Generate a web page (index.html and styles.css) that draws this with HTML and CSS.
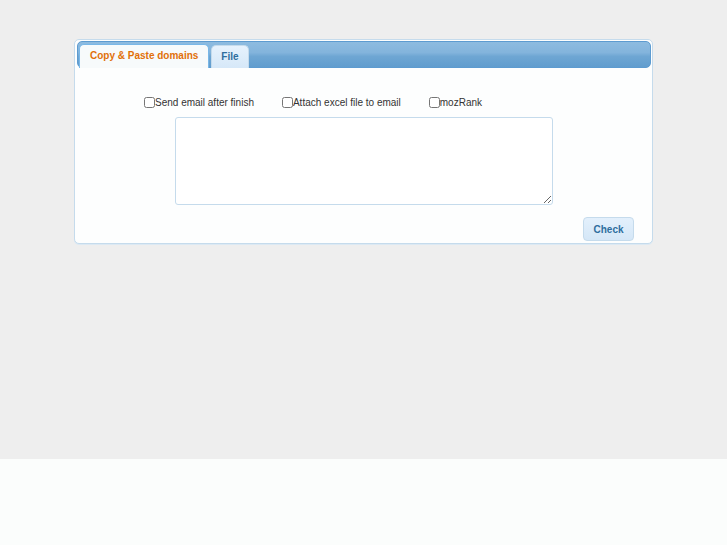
FILE: index.html
```html
<!DOCTYPE html>
<html>
<head>
<meta charset="utf-8">
<link rel="stylesheet" href="styles.css">
</head>
<body>
<div class="page">
  <div class="panel">
    <div class="tabbar">
      <div class="tab active">Copy &amp; Paste domains</div>
      <div class="tab file">File</div>
    </div>
    <div class="content">
      <div class="options">
        <label class="opt"><input type="checkbox">Send email after finish</label>
        <label class="opt"><input type="checkbox">Attach excel file to email</label>
        <label class="opt"><input type="checkbox">mozRank</label>
      </div>
      <textarea class="domains"></textarea>
      <div class="actions">
        <button class="btn">Check</button>
      </div>
    </div>
  </div>
</div>
<div class="rest"></div>
</body>
</html>
```

FILE: styles.css
```css
html, body {
  margin: 0;
  padding: 0;
  background: #fbfdfc;
  font-family: "Liberation Sans", Arial, sans-serif;
}
.page {
  height: 459px;
  box-sizing: border-box;
  background: #eeeeee;
  padding: 39px 0 0 74px;
}
.panel {
  width: 579px;
  height: 205px;
  box-sizing: border-box;
  border: 1px solid #c5dbec;
  border-radius: 5px;
  background: #fdfefe;
  padding: 1px 1px 0 2px;
  box-shadow: 0 1px 0 #dce9f3;
}
.tabbar {
  height: 27px;
  box-sizing: border-box;
  border: 1px solid #5d9bd0;
  border-radius: 5px;
  background: linear-gradient(180deg, #8dbbe0 0%, #83b4dc 42%, #6ea6d3 58%, #619dce 100%);
  display: flex;
  align-items: flex-end;
  gap: 2px;
  padding: 0 0 0 1px;
}
.tab {
  height: 23px;
  box-sizing: border-box;
  margin-bottom: -1px;
  border: 1px solid #c5dbec;
  border-bottom: 0;
  border-radius: 5px 5px 0 0;
  background: linear-gradient(#e6f2fd, #d6e8f8);
  color: #2e6e9e;
  font-size: 10px;
  font-weight: bold;
  padding: 5px 10px 0 10px;
}
.tab.file {
  padding: 5px 9px 0 9px;
}
.tab.active {
  height: 24px;
  background: #f7fafb;
  border-color: #79b7e7;
  color: #e17009;
  padding-top: 5px;
}
.content {
  display: flex;
  flex-direction: column;
  align-items: center;
  padding-top: 29px;
}
.options {
  align-self: flex-start;
  margin-left: 67px;
  display: flex;
  gap: 28px;
  font-size: 10px;
  color: #333;
}
.opt {
  display: flex;
  align-items: center;
}
.opt input {
  margin: 0;
  width: 11px;
  height: 11px;
}
.domains {
  margin-top: 9px;
  width: 378px;
  height: 88px;
  box-sizing: border-box;
  border: 1px solid #c5dbec;
  border-radius: 3px;
  background: #fff;
  resize: both;
}
.actions {
  align-self: stretch;
  display: flex;
  justify-content: flex-end;
  padding: 12px 17px 0 0;
}
.btn {
  width: 51px;
  height: 24px;
  border: 1px solid #c5dbec;
  border-radius: 4px;
  background: linear-gradient(#e3f0fc, #d5e7f7);
  color: #2e6e9e;
  font-family: "Liberation Sans", Arial, sans-serif;
  font-size: 10px;
  font-weight: bold;
  padding: 0;
}
```
